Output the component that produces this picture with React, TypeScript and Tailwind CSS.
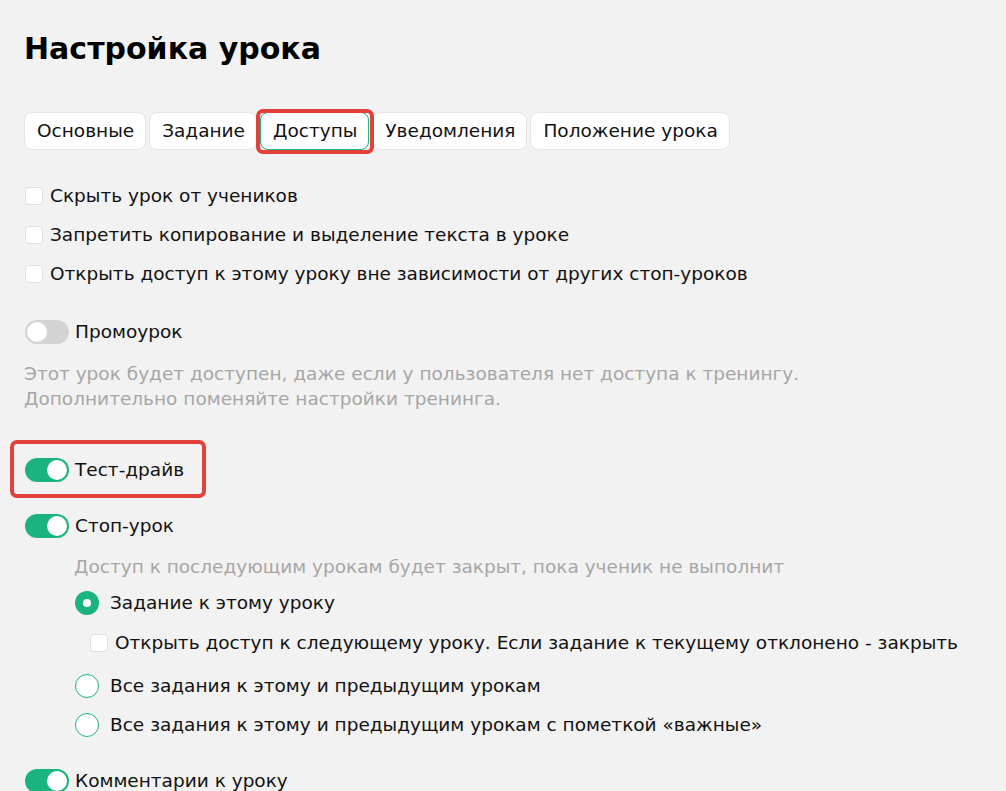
import React from "react";

const font = { fontFamily: '"DejaVu Sans", "Noto Sans", sans-serif' };

function Checkbox() {
  return <span className="inline-block w-[18px] h-[18px] shrink-0 rounded-[4px] bg-white border border-[#e0e0e0]" />;
}

function Toggle({ on }: { on: boolean }) {
  return (
    <span
      className={
        "relative inline-flex w-[44px] h-[24px] shrink-0 rounded-full " +
        (on ? "bg-[#19b47f] justify-end" : "bg-[#d3d3d3] justify-start")
      }
    >
      <span className="m-[2px] w-[20px] h-[20px] rounded-full bg-white" />
    </span>
  );
}

function Radio({ on }: { on: boolean }) {
  return on ? (
    <span className="inline-flex w-[24px] h-[24px] shrink-0 rounded-full bg-[#19b47f] items-center justify-center">
      <span className="w-[8px] h-[8px] rounded-full bg-white" />
    </span>
  ) : (
    <span className="inline-block w-[24px] h-[24px] shrink-0 rounded-full bg-white border-[1.5px] border-[#19b47f]" />
  );
}

const tabs = ["Основные", "Задание", "Доступы", "Уведомления", "Положение урока"];

export default function App() {
  return (
    <div className="min-h-screen bg-[#f2f2f2] text-[#111] pl-[24px] pt-[29px] overflow-hidden text-[18.5px]" style={font}>
      <h1 className="text-[30px] leading-[40px] font-bold text-black">Настройка урока</h1>

      <div className="mt-[43px] flex gap-[3px]">
        {tabs.map((t) =>
          t === "Доступы" ? (
            <div key={t} className="relative">
              <div className="h-[38px] pl-[12px] pr-[11px] flex items-center rounded-[8px] bg-white border border-[#19b47f]">
                {t}
              </div>
              <div className="absolute left-[-4px] right-[-5px] top-[-3px] bottom-[-4px] border-[4px] border-[#e2403a] rounded-[7px] pointer-events-none" />
            </div>
          ) : (
            <div key={t} className="h-[38px] pl-[12px] pr-[11px] flex items-center rounded-[8px] bg-white border border-[#e6e6e6]">
              {t}
            </div>
          )
        )}
      </div>

      <div className="mt-[34px] flex flex-col gap-[15px]">
        {[
          "Скрыть урок от учеников",
          "Запретить копирование и выделение текста в уроке",
          "Открыть доступ к этому уроку вне зависимости от других стоп-уроков",
        ].map((t) => (
          <label key={t} className="h-[24px] flex items-center gap-[7px] pl-[1px]">
            <Checkbox />
            <span>{t}</span>
          </label>
        ))}
      </div>

      <div className="mt-[34px] h-[24px] flex items-center gap-[6px] pl-[1px]">
        <Toggle on={false} />
        <span>Промоурок</span>
      </div>

      <p className="mt-[17px] leading-[25px] text-[#a6a6a6]">
        Этот урок будет доступен, даже если у пользователя нет доступа к тренингу.
        <br />
        Дополнительно поменяйте настройки тренинга.
      </p>

      <div className="mt-[46px] relative h-[25px] flex items-center gap-[6px] pl-[1px] w-max">
        <Toggle on={true} />
        <span>Тест-драйв</span>
        <div className="absolute left-[-14px] top-[-17px] right-[-22px] bottom-[-16px] border-[4px] border-[#e2403a] rounded-[7px] pointer-events-none" />
      </div>

      <div className="mt-[32px] h-[24px] flex items-center gap-[6px] pl-[1px]">
        <Toggle on={true} />
        <span>Стоп-урок</span>
      </div>

      <div className="pl-[50px]">
        <p className="mt-[17px] leading-[24px] text-[#a6a6a6]">
          Доступ к последующим урокам будет закрыт, пока ученик не выполнит
        </p>
        <div className="mt-[12px] h-[24px] flex items-center gap-[11px] pl-[1px]">
          <Radio on={true} />
          <span>Задание к этому уроку</span>
        </div>
        <div className="mt-[16px] h-[24px] flex items-center gap-[7px] pl-[16px]">
          <Checkbox />
          <span>Открыть доступ к следующему уроку. Если задание к текущему отклонено - закрыть</span>
        </div>
        <div className="mt-[19px] h-[24px] flex items-center gap-[11px] pl-[1px]">
          <Radio on={false} />
          <span>Все задания к этому и предыдущим урокам</span>
        </div>
        <div className="mt-[15px] h-[24px] flex items-center gap-[11px] pl-[1px]">
          <Radio on={false} />
          <span>Все задания к этому и предыдущим урокам с пометкой «важные»</span>
        </div>
      </div>

      <div className="mt-[32px] h-[24px] flex items-center gap-[6px] pl-[1px]">
        <Toggle on={true} />
        <span>Комментарии к уроку</span>
      </div>
    </div>
  );
}
